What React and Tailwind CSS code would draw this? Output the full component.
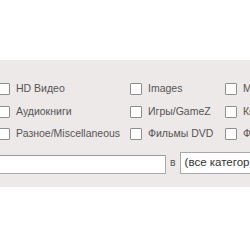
import React from 'react';

const rows = [
  ['HD Видео', 'Images', 'Музыка'],
  ['Аудиокниги', 'Игры/GameZ', 'Книги'],
  ['Разное/Miscellaneous', 'Фильмы DVD', 'Фильмы'],
];

function Box() {
  return <span className="inline-block w-[12px] h-[12px] shrink-0 border border-[#8f8f8f] bg-white rounded-[1px]" />;
}

export default function App() {
  return (
    <div className="w-[250px] h-[250px] overflow-hidden bg-white" style={{ fontFamily: '"Liberation Sans", Arial, sans-serif' }}>
      <div className="h-[60px]" />
      <div className="bg-[#ede9e9] h-[127px] pt-[18px] text-[10.5px] text-[#555]">
        {rows.map((r, i) => (
          <div key={i} className="grid grid-cols-[132px_95px_120px] ml-[-2px] h-[22.5px] items-center whitespace-nowrap">
            {r.map((label) => (
              <label key={label} className="flex items-center gap-[6px]">
                <Box />
                <span>{label}</span>
              </label>
            ))}
          </div>
        ))}
        <div className="flex items-end ml-[-2px] mt-[6px] h-[22px] whitespace-nowrap">
          <div className="w-[168px] h-[19px] shrink-0 bg-white border border-[#a9a9a9] border-t-[#9c9c9c]" />
          <span className="ml-[4px] mr-[4px] mb-[3px] shrink-0">в</span>
          <div className="h-[22px] w-[120px] shrink-0 bg-white border border-[#a9a9a9] pl-[4px] flex items-center text-[11.5px] text-[#333]">
            (все категории)
          </div>
        </div>
      </div>
    </div>
  );
}
